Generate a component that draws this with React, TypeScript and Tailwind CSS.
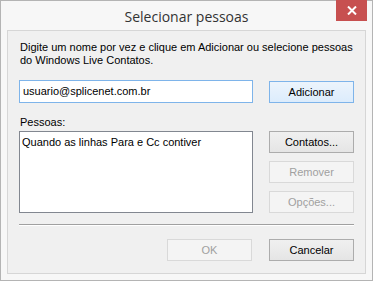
import React from "react";

const font = { fontFamily: '"Liberation Sans", Arial, sans-serif' };

function Btn({ children, variant = "normal" }: { children: React.ReactNode; variant?: "normal" | "default" | "disabled" }) {
  const cls =
    variant === "default"
      ? "border-[#7eb4ea] bg-gradient-to-b from-[#ecf4fc] to-[#dcecfc] text-black"
      : variant === "disabled"
      ? "border-[#d9d9d9] bg-[#f4f4f4] text-[#a0a0a0]"
      : "border-[#acacac] bg-gradient-to-b from-[#f0f0f0] to-[#e5e5e5] text-black";
  return (
    <div className={`w-[85px] h-[22px] border flex items-center justify-center text-[11px] ${cls}`}>
      {children}
    </div>
  );
}

export default function App() {
  return (
    <div className="w-[373px] h-[281px] border border-[#b4b4b4] bg-[#f7f7f7] flex flex-col" style={font}>
      <div className="h-[29px] relative flex items-center justify-center">
        <span className="text-[14px] text-[#333] mt-[1px]" style={{ fontFamily: '"Open Sans", "Noto Sans", sans-serif' }}>
          Selecionar pessoas
        </span>
        <div className="absolute right-[5px] top-[-1px] w-[31px] h-[21px] bg-[#c75050] flex items-center justify-center">
          <svg width="10" height="9" viewBox="0 0 10 9">
            <path d="M1 0.5 L9 8.5 M9 0.5 L1 8.5" stroke="white" strokeWidth="2" />
          </svg>
        </div>
      </div>
      <div className="mx-[6px] mb-[6px] flex-1 border border-[#d6d6d6] bg-[#f0f0f0] pl-[11px] pr-[10px] flex flex-col">
        <p className="mt-[10px] text-[11px] leading-[13px] text-black pl-[1px]">
          Digite um nome por vez e clique em Adicionar ou selecione pessoas
          <br />
          do Windows Live Contatos.
        </p>
        <div className="mt-[13px] flex items-start gap-[16px]">
          <div className="w-[234px] h-[23px] border border-[#7eb4ea] bg-white flex items-center pl-[3px] text-[11px] text-black">
            usuario@splicenet.com.br
          </div>
          <div className="mt-[1px]">
            <Btn variant="default">Adicionar</Btn>
          </div>
        </div>
        <div className="mt-[13px] text-[11px] leading-[13px] pl-[1px] text-black">Pessoas:</div>
        <div className="mt-[2px] flex items-start gap-[16px]">
          <div className="w-[234px] h-[82px] border border-[#828790] bg-white pl-[2px] pt-[4px] text-[11px] leading-[13px] text-black">
            Quando as linhas Para e Cc contiver
          </div>
          <div className="flex flex-col gap-[8px]">
            <Btn>Contatos...</Btn>
            <Btn variant="disabled">Remover</Btn>
            <Btn variant="disabled">Opções...</Btn>
          </div>
        </div>
        <div className="mt-[11px] h-[2px] border-t border-[#a0a0a0] border-b border-b-white w-[335px]" />
        <div className="mt-[13px] flex justify-end gap-[17px] w-[335px]">
          <Btn variant="disabled">OK</Btn>
          <Btn>Cancelar</Btn>
        </div>
      </div>
    </div>
  );
}
